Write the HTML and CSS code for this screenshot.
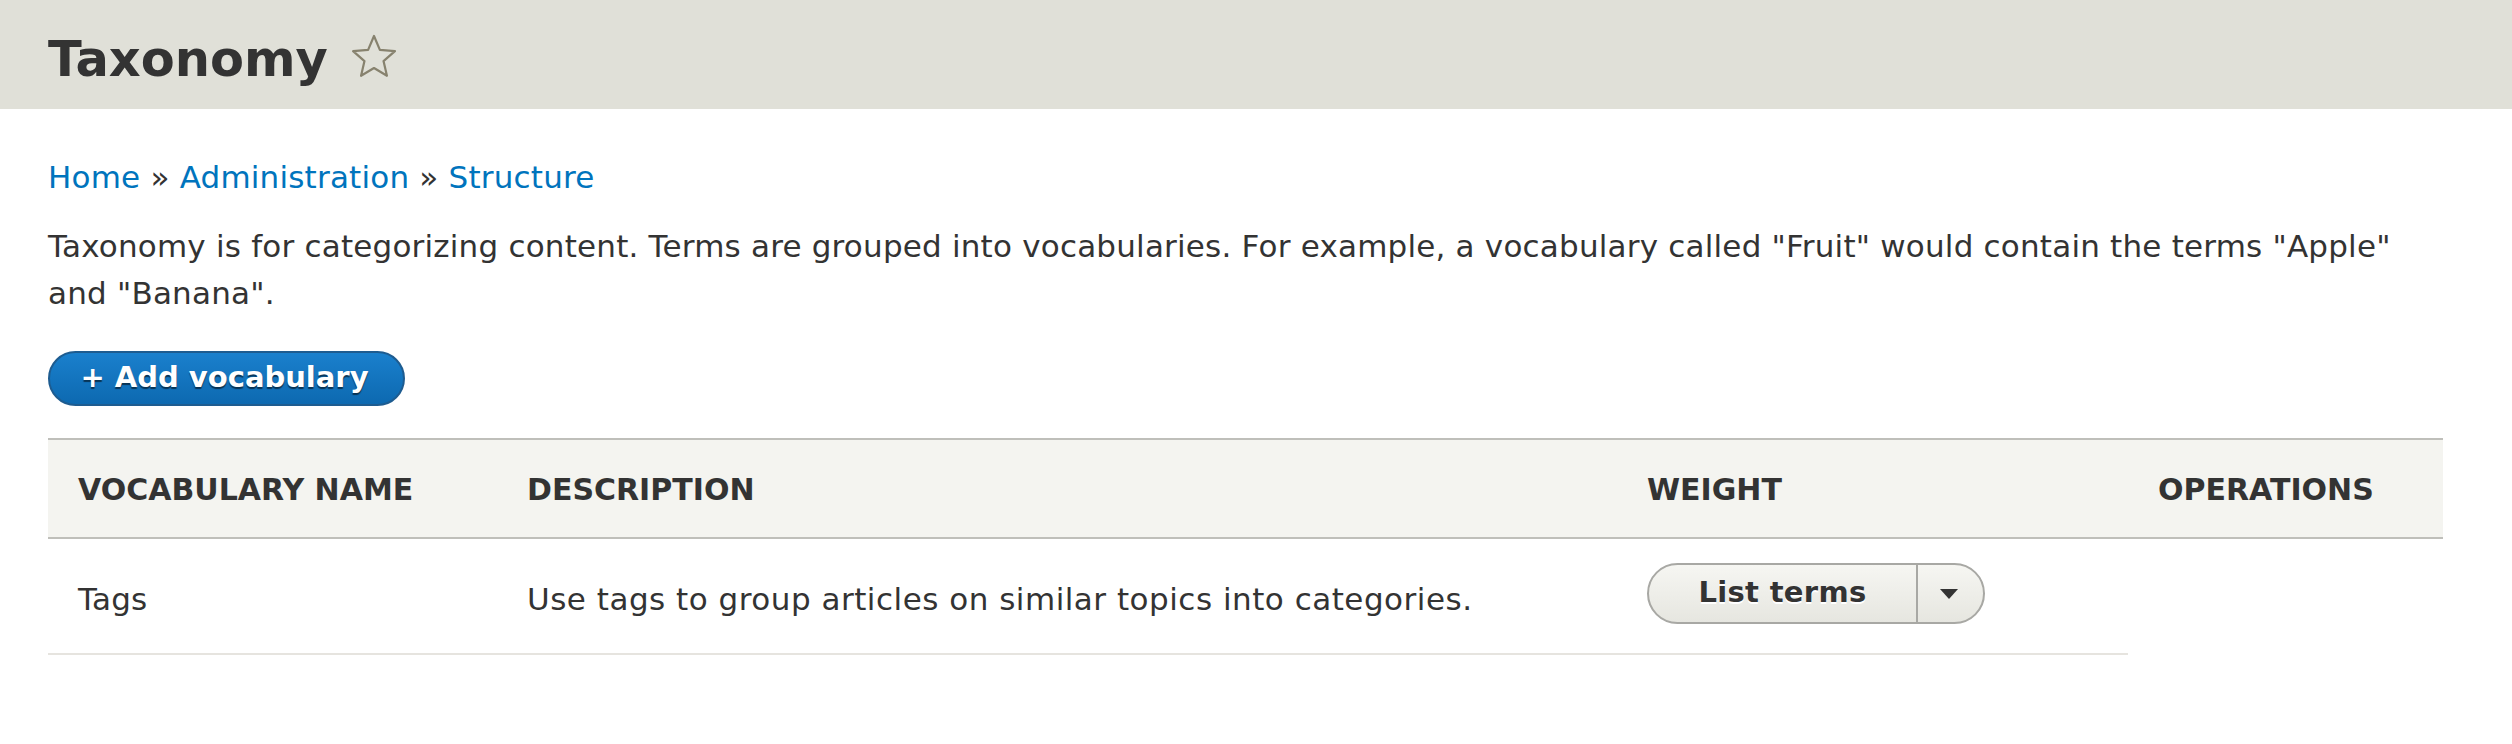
FILE: index.html
```html
<!DOCTYPE html>
<html lang="en">
<head>
<meta charset="utf-8">
<title>Taxonomy</title>
<link rel="stylesheet" href="styles.css">
</head>
<body>
<header class="page-header">
  <h1 class="page-title">Taxonomy</h1>
  <svg class="shortcut-star" viewBox="0 0 24 24" aria-hidden="true">
    <polygon points="12,2 14.94,8.95 22.46,9.6 16.76,14.55 18.47,21.9 12,18 5.53,21.9 7.24,14.55 1.54,9.6 9.06,8.95" />
  </svg>
</header>
<main class="content">
  <nav class="breadcrumb">
    <a href="#">Home</a> » <a href="#">Administration</a> » <a href="#">Structure</a>
  </nav>
  <p class="help">Taxonomy is for categorizing content. Terms are grouped into vocabularies. For example, a vocabulary called "Fruit" would contain the terms "Apple" and "Banana".</p>
  <div class="actions">
    <a class="button-primary" href="#">+ Add vocabulary</a>
  </div>
  <table class="vocab-table">
    <colgroup>
      <col class="col-name">
      <col class="col-desc">
      <col class="col-weight">
      <col class="col-ops">
    </colgroup>
    <thead>
      <tr>
        <th>Vocabulary name</th>
        <th>Description</th>
        <th>Weight</th>
        <th>Operations</th>
      </tr>
    </thead>
    <tbody>
      <tr>
        <td class="text-cell">Tags</td>
        <td class="text-cell desc-cell">Use tags to group articles on similar topics into categories.</td>
        <td class="ops-cell">
          <div class="dropbutton">
            <a class="dropbutton-main" href="#">List terms</a>
            <span class="dropbutton-toggle"><span class="arrow"></span></span>
          </div>
        </td>
      </tr>
    </tbody>
  </table>
</main>
</body>
</html>
```
FILE: styles.css
```css
html, body {
  margin: 0;
  padding: 0;
  background: #ffffff;
}
body {
  font-family: "DejaVu Sans", "Liberation Sans", sans-serif;
  font-size: 31px;
  letter-spacing: 0.2px;
  line-height: 47px;
  color: #333333;
}
a {
  color: #0074bd;
  text-decoration: none;
}
.page-header {
  display: flex;
  align-items: center;
  height: 109px;
  box-sizing: border-box;
  padding: 9px 0 0 48px;
  background: #e0e0d8;
}
.page-title {
  margin: 0;
  font-size: 49.5px;
  line-height: 56px;
  font-weight: bold;
  color: #333333;
  letter-spacing: 0;
}
.shortcut-star {
  width: 48px;
  height: 48px;
  margin-left: 22px;
  margin-top: -6px;
  fill: none;
  stroke: #87826e;
  stroke-width: 1.1;
  stroke-linejoin: round;
}
.content {
  padding: 0 69px 0 48px;
}
.breadcrumb {
  margin-top: 45px;
  color: #333333;
}
.help {
  margin: 22px 0 0 0;
}
.actions {
  margin-top: 34px;
  display: flex;
}
.button-primary {
  display: inline-flex;
  align-items: center;
  justify-content: center;
  box-sizing: border-box;
  height: 55px;
  width: 357px;
  padding: 0 4px 3px 0;
  border: 2px solid #1e5c90;
  border-radius: 28px;
  background: linear-gradient(to bottom, #1a80cd, #0d69b0);
  color: #ffffff;
  font-weight: bold;
  font-size: 29px;
  letter-spacing: 0;
  line-height: 1;
  text-shadow: 0 2px 1px rgba(0, 0, 0, 0.55);
}
.vocab-table {
  margin-top: 32px;
  width: 100%;
  border-collapse: collapse;
  table-layout: fixed;
}
.col-name { width: 449px; }
.col-desc { width: 1120px; }
.col-weight { width: 511px; }
.col-ops { width: auto; }
.vocab-table thead tr {
  background: #f4f4f0;
  border-top: 2px solid #bfbfba;
  border-bottom: 2px solid #bfbfba;
}
.vocab-table th {
  text-align: left;
  text-transform: uppercase;
  font-weight: bold;
  font-size: 30px;
  letter-spacing: 0;
  padding: 26px 0 24px 30px;
  white-space: nowrap;
}
.vocab-table td {
  padding: 24px 0 29px 30px;
  vertical-align: middle;
  border-bottom: 2px solid #e6e4df;
}
.vocab-table td.text-cell {
  padding-top: 30px;
  padding-bottom: 23px;
}
.vocab-table td.desc-cell {
  letter-spacing: 0.5px;
}
.dropbutton {
  display: inline-flex;
  height: 61px;
  box-sizing: border-box;
  border: 2px solid #a8a8a4;
  border-radius: 31px;
  background: linear-gradient(to bottom, #f6f6f2, #e6e6e0);
  overflow: hidden;
}
.dropbutton-main {
  display: flex;
  align-items: center;
  justify-content: center;
  width: 267px;
  color: #333333;
  font-weight: bold;
  font-size: 29px;
  letter-spacing: 0.3px;
  line-height: 1;
  text-shadow: 0 2px 0 #ffffff;
  padding-bottom: 2px;
  border-right: 2px solid #a8a8a4;
}
.dropbutton-toggle {
  display: flex;
  align-items: center;
  justify-content: center;
  width: 65px;
}
.arrow {
  width: 0;
  height: 0;
  border-left: 9px solid transparent;
  border-right: 9px solid transparent;
  border-top: 10px solid #333333;
  margin-right: 4px;
}
```
